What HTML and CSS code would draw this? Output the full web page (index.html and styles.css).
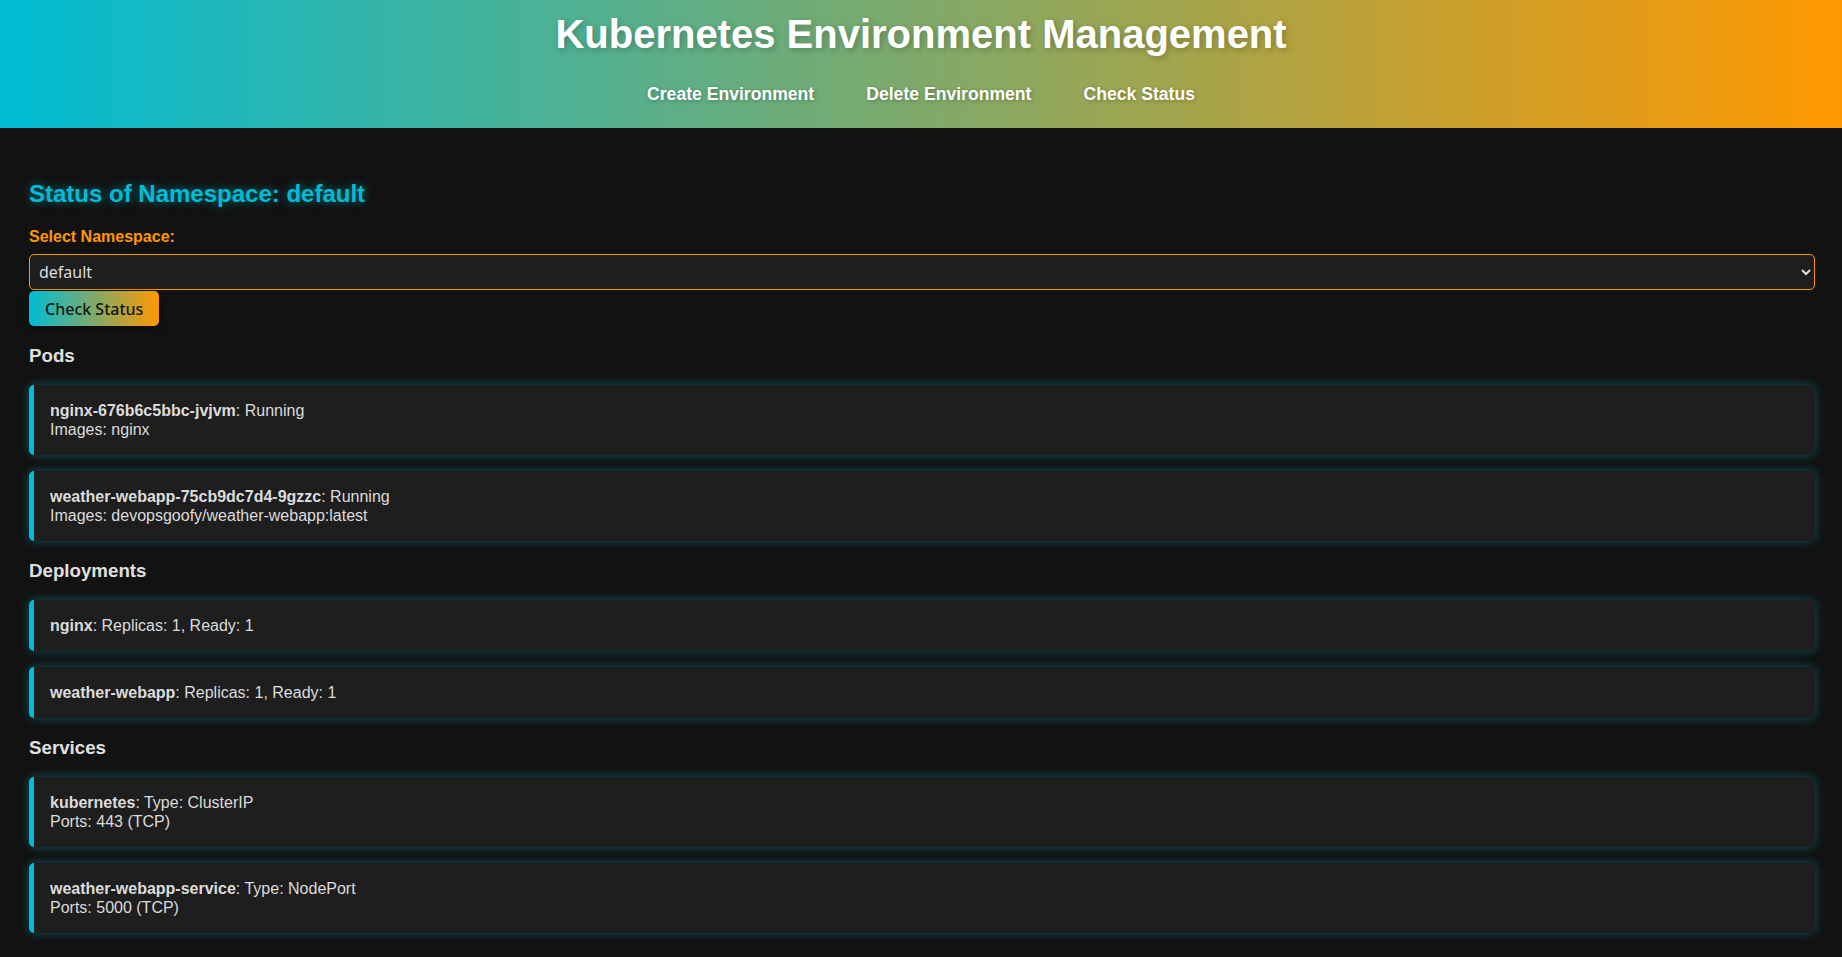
FILE: index.html
```html
<!DOCTYPE html>
<html lang="en">
<head>
<meta charset="utf-8">
<title>Kubernetes Environment Management</title>
<link rel="stylesheet" href="styles.css">
</head>
<body>
<header class="site-header">
  <h1 class="site-title">Kubernetes Environment Management</h1>
  <nav class="site-nav">
    <a class="nav-link" href="#">Create Environment</a>
    <a class="nav-link" href="#">Delete Environment</a>
    <a class="nav-link" href="#">Check Status</a>
  </nav>
</header>
<main class="content">
  <h2 class="status-title">Status of Namespace: default</h2>
  <form class="ns-form">
    <label class="ns-label" for="ns">Select Namespace:</label>
    <select class="ns-select" id="ns">
      <option>default</option>
    </select>
    <button class="btn" type="button">Check Status</button>
  </form>

  <h3 class="section-title">Pods</h3>
  <ul class="card-list">
    <li class="card"><strong>nginx-676b6c5bbc-jvjvm</strong>: Running<br>Images: nginx</li>
    <li class="card"><strong>weather-webapp-75cb9dc7d4-9gzzc</strong>: Running<br>Images: devopsgoofy/weather-webapp:latest</li>
  </ul>

  <h3 class="section-title">Deployments</h3>
  <ul class="card-list">
    <li class="card"><strong>nginx</strong>: Replicas: 1, Ready: 1</li>
    <li class="card"><strong>weather-webapp</strong>: Replicas: 1, Ready: 1</li>
  </ul>

  <h3 class="section-title">Services</h3>
  <ul class="card-list">
    <li class="card"><strong>kubernetes</strong>: Type: ClusterIP<br>Ports: 443 (TCP)</li>
    <li class="card"><strong>weather-webapp-service</strong>: Type: NodePort<br>Ports: 5000 (TCP)</li>
  </ul>
</main>
</body>
</html>
```
FILE: styles.css
```css
* { box-sizing: border-box; }

body {
  margin: 0;
  background: #121212;
  color: #e0e0e0;
  font-family: "Liberation Sans", Arial, sans-serif;
  font-size: 16px;
}

.site-header {
  height: 128px;
  padding: 11px 0 0;
  background: linear-gradient(to right, #00bcd4, #ff9800);
  text-align: center;
}

.site-title {
  margin: 0;
  font-size: 40px;
  font-weight: bold;
  line-height: 46px;
  color: #ffffff;
  text-shadow: 2px 2px 6px rgba(0, 0, 0, 0.25);
}

.site-nav {
  margin-top: 19px;
  display: flex;
  justify-content: center;
  gap: 20px;
}

.nav-link {
  padding: 8px 16px;
  color: #ffffff;
  text-decoration: none;
  font-weight: bold;
  font-size: 17.6px;
  line-height: 20px;
  text-shadow: 1px 1px 4px rgba(0, 0, 0, 0.3);
}

.content {
  padding: 52px 27px 8px 29px;
}

.status-title {
  margin: 0;
  font-size: 24px;
  line-height: 28px;
  color: #00bcd4;
  text-shadow: 0 0 10px rgba(0, 188, 212, 0.6);
}

.ns-form {
  margin-top: 20px;
  display: flex;
  flex-direction: column;
  align-items: flex-start;
}

.ns-label {
  font-weight: bold;
  color: #ff9800;
  line-height: 18px;
  margin-bottom: 8px;
}

.ns-select {
  width: 100%;
  height: 36px;
  padding: 0 5px;
  background: #1e1e1e;
  color: #dddddd;
  border: 1px solid #ff9800;
  border-radius: 5px;
  font-family: "Noto Sans", "DejaVu Sans", sans-serif;
  font-size: 16px;
}

.btn {
  margin-top: 1px;
  height: 35px;
  padding: 0 16px;
  border: none;
  border-radius: 5px;
  background: linear-gradient(to right, #00bcd4, #ff9800);
  color: #151515;
  font-family: "Noto Sans", "DejaVu Sans", sans-serif;
  font-size: 16px;
  font-weight: 500;
  box-shadow: 0 2px 6px rgba(0, 0, 0, 0.4);
}

.section-title {
  margin: 19px 0 18px;
  font-size: 18.72px;
  line-height: 22px;
  color: #e0e0e0;
}

.card-list {
  list-style: none;
  margin: 0;
  padding: 0;
  display: flex;
  flex-direction: column;
  gap: 16px;
}

.card {
  padding: 16px 16px;
  line-height: 19px;
  background: #1e1e1e;
  color: #dcdcdc;
  border-left: 5px solid #00bcd4;
  border-radius: 5px;
  box-shadow: 0 0 10px rgba(0, 188, 212, 0.4);
}

.card strong { font-weight: bold; }
```
